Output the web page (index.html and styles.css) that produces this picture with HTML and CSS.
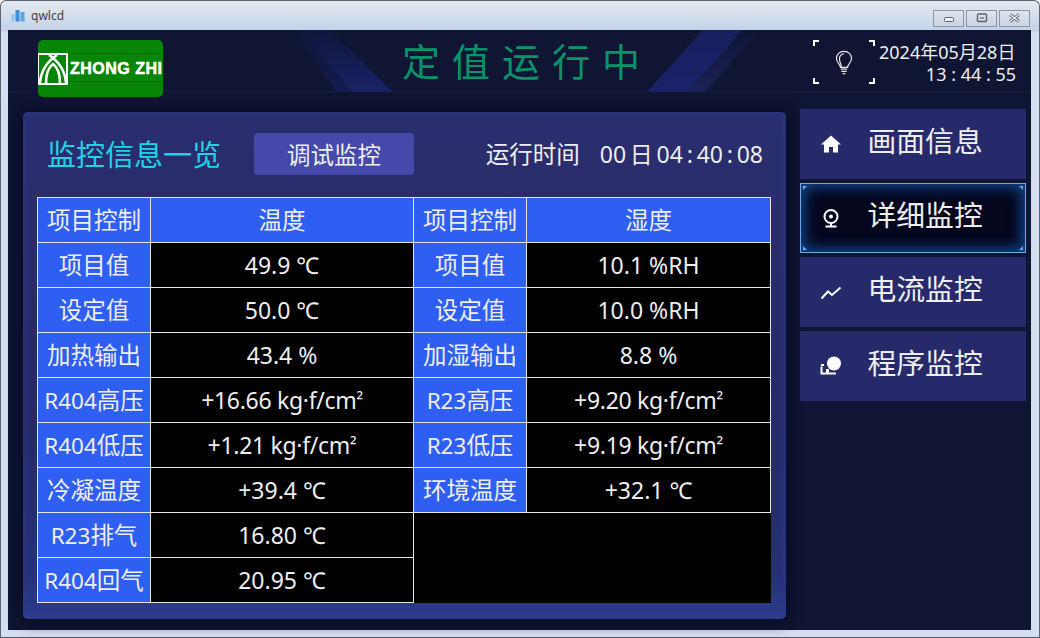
FILE: index.html
```html
<!DOCTYPE html>
<html lang="zh-CN">
<head>
<meta charset="utf-8">
<title>qwlcd</title>
<link rel="stylesheet" href="styles.css">
</head>
<body>
<div class="window">
  <div class="titlebar">
    <svg class="app-icon" width="14" height="13" viewBox="0 0 14 13"><rect x="0.5" y="5" width="3" height="7.5" fill="#8cc6ee"/><rect x="4.5" y="1" width="4" height="11.5" fill="#3d8fd6"/><rect x="9.5" y="3" width="4" height="9.5" fill="#5aa6e2"/></svg>
    <span class="app-name">qwlcd</span>
    <div class="win-buttons">
      <div class="win-btn"><svg width="12" height="8" viewBox="0 0 12 8"><rect x="1.5" y="3.5" width="9" height="4" rx="1" fill="#eef2f7" stroke="#5c6470"/></svg></div>
      <div class="win-btn"><svg width="12" height="10" viewBox="0 0 12 10"><rect x="1.5" y="1" width="9" height="7.5" rx="1" fill="none" stroke="#5c6470" stroke-width="1.4"/><rect x="4" y="4" width="4" height="2" fill="#5c6470" opacity=".6"/></svg></div>
      <div class="win-btn"><svg width="13" height="10" viewBox="0 0 13 10"><path d="M2 1.5 11 8.5M11 1.5 2 8.5" stroke="#5c6470" stroke-width="3"/><path d="M2 1.5 11 8.5M11 1.5 2 8.5" stroke="#f2f5f8" stroke-width="1.2"/></svg></div>
    </div>
  </div>
  <div class="app">
    <header class="header">
      <svg class="header-art" width="1023" height="62" viewBox="0 0 1023 62">
        <defs>
          <linearGradient id="fadeDown" x1="0" y1="0" x2="0" y2="1"><stop offset="0" stop-color="#10163c"/><stop offset="1" stop-color="#1a2266"/></linearGradient>
          <linearGradient id="fadeDim" x1="0" y1="0" x2="0" y2="1"><stop offset="0" stop-color="#0f1536"/><stop offset="1" stop-color="#151c50"/></linearGradient>
          <linearGradient id="fadeUp" x1="0" y1="0" x2="0" y2="1"><stop offset="0" stop-color="#181f5e"/><stop offset="1" stop-color="#1a226a"/></linearGradient>
          <linearGradient id="fadeEdge" x1="0" y1="0" x2="0" y2="1"><stop offset="0" stop-color="#0f1536"/><stop offset="1" stop-color="#1c2254"/></linearGradient>
        </defs>
        <polygon points="285,0 292,0 344,62 329,62" fill="url(#fadeDim)"/>
        <polygon points="292,0 322,0 385,62 344,62" fill="url(#fadeDown)"/>
        <polygon points="695,0 735,0 680,62 639,62" fill="url(#fadeUp)"/>
        <polygon points="735,0 752,0 697,62 680,62" fill="url(#fadeEdge)"/>
      </svg>
      <div class="logo">
        <div class="logo-mark">
          <svg width="30" height="32" viewBox="0 0 30 32"><rect x="0" y="1" width="29" height="30" fill="#078507" stroke="#fff" stroke-width="2"/><path d="M2 30C3 17 10 8 19 2M28 30C27 17 20 8 11 2M8 30C8 20 11 14 15 11 19 14 22 20 22 30" fill="none" stroke="#fff" stroke-width="2.6"/></svg>
        </div>
        <span class="logo-text">ZHONG ZHI</span>
      </div>
      <h1 class="run-title">定值运行中</h1>
      <div class="lamp">
        <i class="corner tl"></i><i class="corner tr"></i><i class="corner bl"></i><i class="corner br"></i>
        <svg width="18" height="25" viewBox="0 0 20 28" fill="none" stroke="#e8e8e8" stroke-width="1.3"><path d="M6 19.5C6 16 2 14.5 1.6 10 1.4 5 5 1.5 10 1.5S18.6 5 18.4 10C18 14.5 14 16 14 19.5Z"/><path d="M5 10C4.6 7 7 4.4 10 4.2M7 19C7 15 4.5 13 5 10"/><path d="M6.5 21.5H13.5M7 24H13M8.5 26.5H11.5"/></svg>
      </div>
      <div class="clock">
        <div>2024年05月28日</div>
        <div>13 : 44 : 55</div>
      </div>
    </header>
    <main class="main">
      <section class="panel">
        <div class="panel-head">
          <h2 class="panel-title">监控信息一览</h2>
          <button class="debug-btn">调试监控</button>
          <div class="run-time"><span>运行时间</span><span class="run-value">00 日 04 : 40 : 08</span></div>
        </div>
        <table class="data">
          <colgroup><col class="c1"><col class="c2"><col class="c3"><col class="c4"></colgroup>
          <tbody>
            <tr class="head"><th>项目控制</th><th>温度</th><th>项目控制</th><th>湿度</th></tr>
            <tr><th>项目值</th><td>49.9 ℃</td><th>项目值</th><td>10.1 %RH</td></tr>
            <tr><th>设定值</th><td>50.0 ℃</td><th>设定值</th><td>10.0 %RH</td></tr>
            <tr><th>加热输出</th><td>43.4 %</td><th>加湿输出</th><td>8.8 %</td></tr>
            <tr><th><span class="lat">R404</span>高压</th><td class="pres">+16.66 kg·f/cm<span class="sq">²</span></td><th><span class="lat">R23</span>高压</th><td class="pres">+9.20 kg·f/cm<span class="sq">²</span></td></tr>
            <tr><th><span class="lat">R404</span>低压</th><td class="pres">+1.21 kg·f/cm<span class="sq">²</span></td><th><span class="lat">R23</span>低压</th><td class="pres">+9.19 kg·f/cm<span class="sq">²</span></td></tr>
            <tr><th>冷凝温度</th><td>+39.4 ℃</td><th>环境温度</th><td>+32.1 ℃</td></tr>
            <tr><th><span class="lat">R23</span>排气</th><td>16.80 ℃</td><td class="blank" colspan="2" rowspan="2"></td></tr>
            <tr><th><span class="lat">R404</span>回气</th><td>20.95 ℃</td></tr>
          </tbody>
        </table>
      </section>
      <nav class="side">
        <a class="nav-item">
          <svg class="nav-icon" width="22" height="22" viewBox="0 0 22 22"><path d="M11 2.5 1 11.5H4V19.5H9V14H13V19.5H18V11.5H21Z" fill="#fff"/></svg>
          <span>画面信息</span>
        </a>
        <a class="nav-item active">
          <i class="tick a"></i><i class="tick b"></i><i class="tick c"></i><i class="tick d"></i>
          <svg class="nav-icon" width="22" height="22" viewBox="0 0 22 22" fill="none" stroke="#fff" stroke-width="2"><circle cx="11" cy="9.5" r="6.5"/><circle cx="11" cy="9.5" r="2" fill="#fff" stroke="none"/><path d="M5.5 19.5H16.5M11 16V19"/></svg>
          <span>详细监控</span>
        </a>
        <a class="nav-item">
          <svg class="nav-icon" width="22" height="22" viewBox="0 0 22 22" fill="none" stroke="#fff" stroke-width="2"><path d="M1.5 17.5 8 10.5 12 14 20.5 6.5"/></svg>
          <span>电流监控</span>
        </a>
        <a class="nav-item">
          <svg class="nav-icon" width="22" height="22" viewBox="0 0 22 22"><circle cx="14" cy="8.5" r="7" fill="#fff"/><path d="M2.5 12.5H1.5V18.5H16" fill="none" stroke="#fff" stroke-width="2"/><rect x="6" y="14" width="3" height="4" fill="#fff"/><rect x="1" y="9" width="3" height="2" fill="#fff"/></svg>
          <span>程序监控</span>
        </a>
      </nav>
    </main>
  </div>
</div>
</body>
</html>
```
FILE: styles.css
```css
* { box-sizing: border-box; }
html, body { margin: 0; height: 100%; background: #fff; }
body { font-family: "Noto Sans", "Noto Sans CJK SC", sans-serif; overflow: hidden; }
.window {
  width: 1040px; height: 638px;
  display: flex; flex-direction: column;
  padding: 0 7px 7px 7px;
  border: 1px solid #5d6274;
  border-bottom-color: #4f5568;
  border-radius: 6px 6px 0 0;
  background: linear-gradient(#e4eaf1 0, #c3d2e8 30px, #d4deef 31px);
}
.titlebar { height: 29px; flex: none; display: flex; align-items: center; position: relative; }
.app-icon { margin: 0 0 0 3px; }
.app-name { font-size: 12px; color: #444; margin-left: 6px; }
.win-buttons { margin-left: auto; display: flex; gap: 2px; margin-right: 2px; margin-top: 5px; }
.win-btn {
  width: 31px; height: 17px;
  display: flex; align-items: center; justify-content: center;
  border: 1px solid #8b95a6;
  background: linear-gradient(#dfe5ec, #c8d4e2);
}
.app { flex: 1; min-height: 0; background: #0f1533; width: 1023px; }

.header { height: 62px; position: relative; display: flex; padding: 10px 0 0 30px; border-bottom: 1px solid #161d45; }
.header-art { position: absolute; left: 0; top: 0; }
.logo {
  position: relative;
  width: 125px; height: 57px;
  background: linear-gradient(#078507 0, #078507 13px, #067206 13px, #067206 14px, #078507 14px, #078507 41px, #067206 41px, #067206 42px, #078507 42px);
  border-radius: 5px;
  display: flex; align-items: center; padding-top: 1px;
  flex: none;
}
.logo-mark { width: 30px; height: 32px; flex: none; }
.logo-mark svg { display: block; }
.logo-text { font: 700 16px "Liberation Sans", sans-serif; color: #fff; margin-left: 2px; white-space: nowrap; letter-spacing: .5px; -webkit-text-stroke: .5px #fff; }
.run-title {
  position: relative; margin: -4px 0 0 239px; flex: none;
  font-size: 38px; line-height: 50px; font-weight: 400; height: 50px;
  letter-spacing: 12px; color: #0c9268;
}
.lamp {
  position: relative; width: 62px; height: 44px; flex: none;
  margin-left: 161px;
  display: flex; align-items: center; justify-content: center;
  padding-top: 1px;
}
.corner { position: absolute; width: 6px; height: 6px; border: 0 solid #fff; }
.corner.tl { left: 0; top: 0; border-width: 2px 0 0 2px; }
.corner.tr { right: 0; top: 0; border-width: 2px 2px 0 0; }
.corner.bl { left: 0; bottom: 0; border-width: 0 0 2px 2px; }
.corner.br { right: 0; bottom: 0; border-width: 0 2px 2px 0; }
.clock { position: relative; margin: 1px 0 0 4px; width: 136px; text-align: right; color: #eee; font-size: 18px; line-height: 22px; white-space: nowrap; }
.clock div:last-child { margin-right: -1px; }

.main { display: flex; align-items: flex-start; }
.panel {
  width: 763px; height: 507px; flex: none;
  margin: 20px 0 0 15px;
  padding: 0 14px;
  border-radius: 5px;
  background: linear-gradient(#2a2e6e 0, #262a68 60%, #263178 92%, #2d3d8e 100%);
  box-shadow: 0 0 14px 3px #080b22, inset 0 0 8px #2d3a88;
}
.panel-head { height: 85px; display: flex; align-items: center; padding-bottom: 2px; color: #eee; }
.panel-title { margin: 0 0 2px 10px; width: 207px; flex: none; font-size: 29px; font-weight: 400; color: #1fd3e6; }
.debug-btn {
  width: 160px; height: 42px; flex: none;
  border: 0; border-radius: 4px; background: #4549aa; color: #eee;
  font: inherit; font-size: 23.5px; padding: 0;
}
.run-time { margin: 0 9px 2px auto; display: flex; gap: 20px; font-size: 23.5px; }
.run-value { font-size: 23px; word-spacing: -2.2px; }

.data { border-collapse: collapse; table-layout: fixed; width: 733px; background: #000; }
.c1 { width: 113px; } .c2 { width: 263px; } .c3 { width: 113px; } .c4 { width: 244px; }
.data tr { height: 45px; }
.data th, .data td { border: 1px solid #e6e6e6; padding: 0; font-size: 23.5px; line-height: 30px; font-weight: 400; color: #eee; text-align: center; white-space: nowrap; }
.data th { background: #2f5ef2; }
.data td { background: #000; font-size: 23px; }
.data .pres { letter-spacing: -.3px; }
.data .blank { border-right: 0; border-bottom: 0; }
.lat { font-size: 22.5px; }
.sq { font-size: 19px; vertical-align: 2px; line-height: 1; }

.side { margin: 17px 0 0 14px; display: flex; flex-direction: column; gap: 4px; flex: none; }
.nav-item {
  width: 226px; height: 70px; position: relative;
  display: flex; align-items: center;
  background: #26296a; color: #eee;
  font-size: 28.8px; padding-left: 20px;
}
.nav-item span { padding-bottom: 10px; }
.nav-icon { flex: none; margin-right: 25.5px; }
.nav-item.active {
  background: #05071f;
  border: 1px solid #6ea9e6;
  padding-left: 19px;
  box-shadow: inset 0 0 14px 3px #134a94;
}
.tick { position: absolute; width: 0; height: 0; border: 2px solid transparent; }
.tick.a { left: 2px; top: 2px; border-top-color: #6ea9e6; border-left-color: #6ea9e6; }
.tick.b { right: 2px; top: 2px; border-top-color: #6ea9e6; border-right-color: #6ea9e6; }
.tick.c { left: 2px; bottom: 2px; border-bottom-color: #6ea9e6; border-left-color: #6ea9e6; }
.tick.d { right: 2px; bottom: 2px; border-bottom-color: #6ea9e6; border-right-color: #6ea9e6; }
```
